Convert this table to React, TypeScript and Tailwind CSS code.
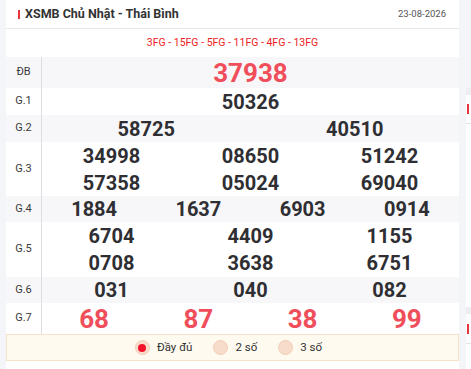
import React from "react";

type Row = { label: string; cols: number; nums: string[]; red?: boolean; big?: boolean; h: string; bg: string };

const rows: Row[] = [
  { label: "ĐB", cols: 1, nums: ["37938"], red: true, big: true, h: "h-[31px]", bg: "bg-[#f7f7f9]" },
  { label: "G.1", cols: 1, nums: ["50326"], h: "h-[27px]", bg: "bg-white" },
  { label: "G.2", cols: 2, nums: ["58725", "40510"], h: "h-[27px]", bg: "bg-[#f7f7f9]" },
  { label: "G.3", cols: 3, nums: ["34998", "08650", "51242", "57358", "05024", "69040"], h: "h-[54px]", bg: "bg-white" },
  { label: "G.4", cols: 4, nums: ["1884", "1637", "6903", "0914"], h: "h-[26px]", bg: "bg-[#f7f7f9]" },
  { label: "G.5", cols: 3, nums: ["6704", "4409", "1155", "0708", "3638", "6751"], h: "h-[55px]", bg: "bg-white" },
  { label: "G.6", cols: 3, nums: ["031", "040", "082"], h: "h-[26px]", bg: "bg-[#f7f7f9]" },
  { label: "G.7", cols: 4, nums: ["68", "87", "38", "99"], red: true, big: true, h: "h-[31px]", bg: "bg-white" },
];

const gridCols: Record<number, string> = {
  1: "grid-cols-1",
  2: "grid-cols-2",
  3: "grid-cols-3",
  4: "grid-cols-4",
};

function Radio({ label, checked }: { label: string; checked?: boolean }) {
  return (
    <div className="flex items-center gap-[7px]">
      <span className="flex h-[15px] w-[15px] items-center justify-center rounded-full border border-[#f1cdb6] bg-[#f8dcca]">
        {checked && <span className="h-[8px] w-[8px] rounded-full bg-[#f3142b]" />}
      </span>
      <span className="text-[11.5px] text-[#333]">{label}</span>
    </div>
  );
}

export default function App() {
  return (
    <div
      className="flex h-[369px] w-[471px] overflow-hidden bg-[#f4f5f8] pl-[6px]"
      style={{ fontFamily: "Roboto, 'Noto Sans', sans-serif" }}
    >
      <section className="flex w-[453px] shrink-0 flex-col bg-white">
        <header className="flex h-[29px] items-center justify-between border-b border-[#e8e8ec] pl-[12px] pr-[13px]">
          <div className="flex items-center">
            <span className="h-[9px] w-[2px] bg-[#e8333c]" />
            <h1 className="ml-[5px] text-[12.5px] font-bold text-[#333]">XSMB Chủ Nhật - Thái Bình</h1>
          </div>
          <div className="text-[9.5px] text-[#555]">23-08-2026</div>
        </header>

        <div className="flex h-[28px] items-center justify-center text-[10.5px] text-[#ec1c24]">
          3FG - 15FG - 5FG - 11FG - 4FG - 13FG
        </div>

        <div className="flex flex-col">
          {rows.map((row) => (
            <div key={row.label} className={`flex ${row.h} ${row.bg}`}>
              <div className="flex w-[36px] shrink-0 items-center justify-center border-r border-[#dedee2] text-[11px] text-[#3a3a3a]">
                {row.label}
              </div>
              <div className={`grid flex-1 ${gridCols[row.cols]} items-center`}>
                {row.nums.map((n, i) => (
                  <div
                    key={i}
                    className={`text-center font-bold leading-none ${
                      row.red ? "text-[#f04e5a]" : "text-[#2f2f33]"
                    } ${row.big ? "text-[26px]" : "text-[20px]"}`}
                  >
                    {n}
                  </div>
                ))}
              </div>
            </div>
          ))}
        </div>

        <div className="flex h-[27px] items-center justify-center gap-[21px] border border-[#f5e2c9] bg-[#fffaf0] pr-[8px]">
          <Radio label="Đầy đủ" checked />
          <Radio label="2 số" />
          <Radio label="3 số" />
        </div>
      </section>

      <aside className="ml-[7px] flex flex-1 flex-col pt-[88px]">
        <div className="h-[7px] bg-[#eeeef2]" />
        <div className="flex h-[212px] flex-col bg-white">
          <div className="flex h-[29px] items-center border-b border-[#e2e2e6]">
            <span className="ml-[1px] h-[10px] w-[2px] bg-[#e8333c]" />
          </div>
        </div>
        <div className="h-[7px] bg-[#eeeef2]" />
        <div className="flex flex-1 flex-col bg-white">
          <div className="flex h-[30px] items-center border-b border-[#e2e2e6]">
            <span className="ml-[1px] h-[10px] w-[2px] bg-[#e8333c]" />
          </div>
        </div>
      </aside>
    </div>
  );
}
